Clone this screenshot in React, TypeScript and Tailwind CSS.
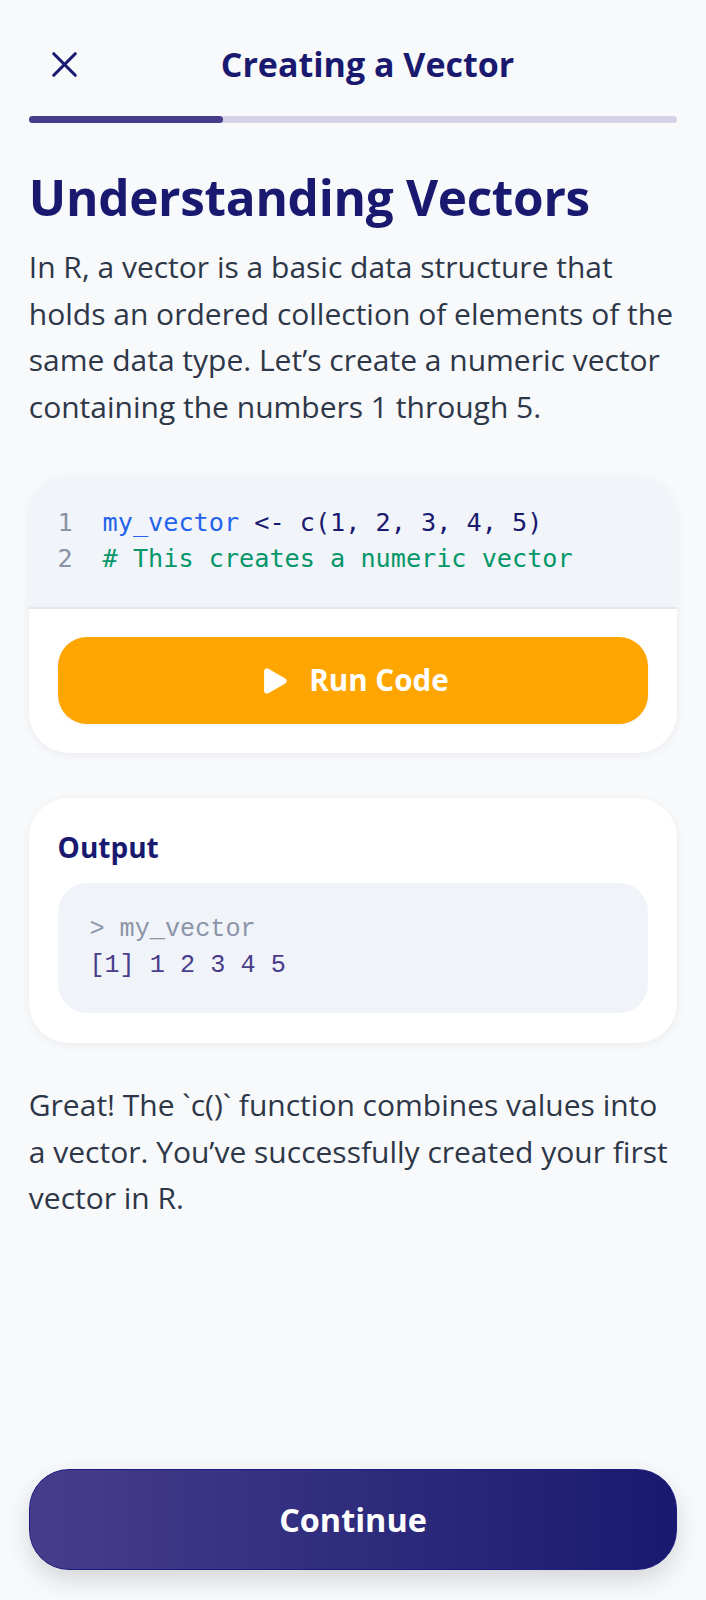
import React from "react";
import { X, Play } from "lucide-react";

export default function App() {
  return (
    <div className="min-h-screen bg-[#f8f9fb] flex flex-col font-['Open_Sans',sans-serif]">
      <header className="px-[28.8px] pt-[28.8px]">
        <div className="flex items-center">
          <button className="w-[72px] h-[72px] flex items-center justify-center text-[#191970]">
            <X size={43} strokeWidth={1.75} />
          </button>
          <h1 className="flex-1 text-center text-[#191970] font-bold text-[34px] leading-[1.2]">
            Creating a Vector
          </h1>
          <div className="w-[43px]" />
        </div>
        <div className="mt-[15px] h-[7px] rounded-full bg-[#d5d3e5]">
          <div className="h-full w-[30%] rounded-full bg-[#483D8B]" />
        </div>
      </header>

      <main className="px-[28.8px]">
        <h2 className="mt-[44px] text-[49.5px] leading-[60px] font-bold text-[#191970] tracking-[-0.3px]">
          Understanding Vectors
        </h2>
        <p className="mt-[17px] text-[30px] leading-[46.8px] text-[#2d3748]">
          In R, a vector is a basic data structure that
          <br />
          holds an ordered collection of elements of the
          <br />
          same data type. Let’s create a numeric vector
          <br />
          containing the numbers 1 through 5.
        </p>

        <section className="mt-[45px] bg-white rounded-[40px] overflow-hidden shadow-[0_2px_10px_rgba(15,23,42,0.06)]">
          <div className="bg-[#f1f4f9] px-[28.8px] pt-[28.8px] pb-[29.8px] border-b-2 border-[#e3e8ef] font-['DejaVu_Sans_Mono',monospace] text-[25.2px] leading-[36px]">
            <div className="flex">
              <span className="w-[45px] text-[#8a93a6]">1</span>
              <span className="whitespace-pre">
                <span className="text-[#2563eb]">my_vector</span>
                <span className="text-[#191970]"> &lt;- c(1, 2, 3, 4, 5)</span>
              </span>
            </div>
            <div className="flex">
              <span className="w-[45px] text-[#8a93a6]">2</span>
              <span className="whitespace-pre text-[#059669]"># This creates a numeric vector</span>
            </div>
          </div>
          <div className="p-[28.8px]">
            <button className="w-full h-[86.4px] rounded-[29px] bg-[#FFA500] flex items-center justify-center gap-[18px] text-white font-bold text-[29.6px] shadow-[0_1px_3px_rgba(0,0,0,0.06)]">
              <Play size={34} fill="white" strokeWidth={0} />
              <span>Run Code</span>
            </button>
          </div>
        </section>

        <section className="mt-[45px] bg-white rounded-[40px] px-[28.8px] pt-[28.8px] pb-[29.8px] shadow-[0_2px_10px_rgba(15,23,42,0.06)]">
          <div className="text-[28px] leading-[43px] font-bold text-[#191970]">Output</div>
          <div className="mt-[14px] bg-[#f0f3f8] rounded-[29px] p-[28.8px] font-['Liberation_Mono',monospace] text-[25.2px] leading-[36px]">
            <div className="text-[#8c95a8] whitespace-pre pl-[3px]">&gt; my_vector</div>
            <div className="text-[#483D8B] whitespace-pre pl-[3px]">[1] 1 2 3 4 5</div>
          </div>
        </section>

        <p className="mt-[39px] text-[30px] leading-[46.8px] text-[#2d3748]">
          Great! The `c()` function combines values into
          <br />
          a vector. You’ve successfully created your first
          <br />
          vector in R.
        </p>
      </main>

      <footer className="mt-auto px-[28.8px] pb-[30px] pt-[20px]">
        <button className="w-full h-[100.8px] rounded-[40px] border border-[#1a1a80] bg-gradient-to-r from-[#483D8B] to-[#191970] text-white font-bold text-[32.4px] shadow-[0_10px_24px_rgba(0,0,0,0.14)]">
          Continue
        </button>
      </footer>
    </div>
  );
}
